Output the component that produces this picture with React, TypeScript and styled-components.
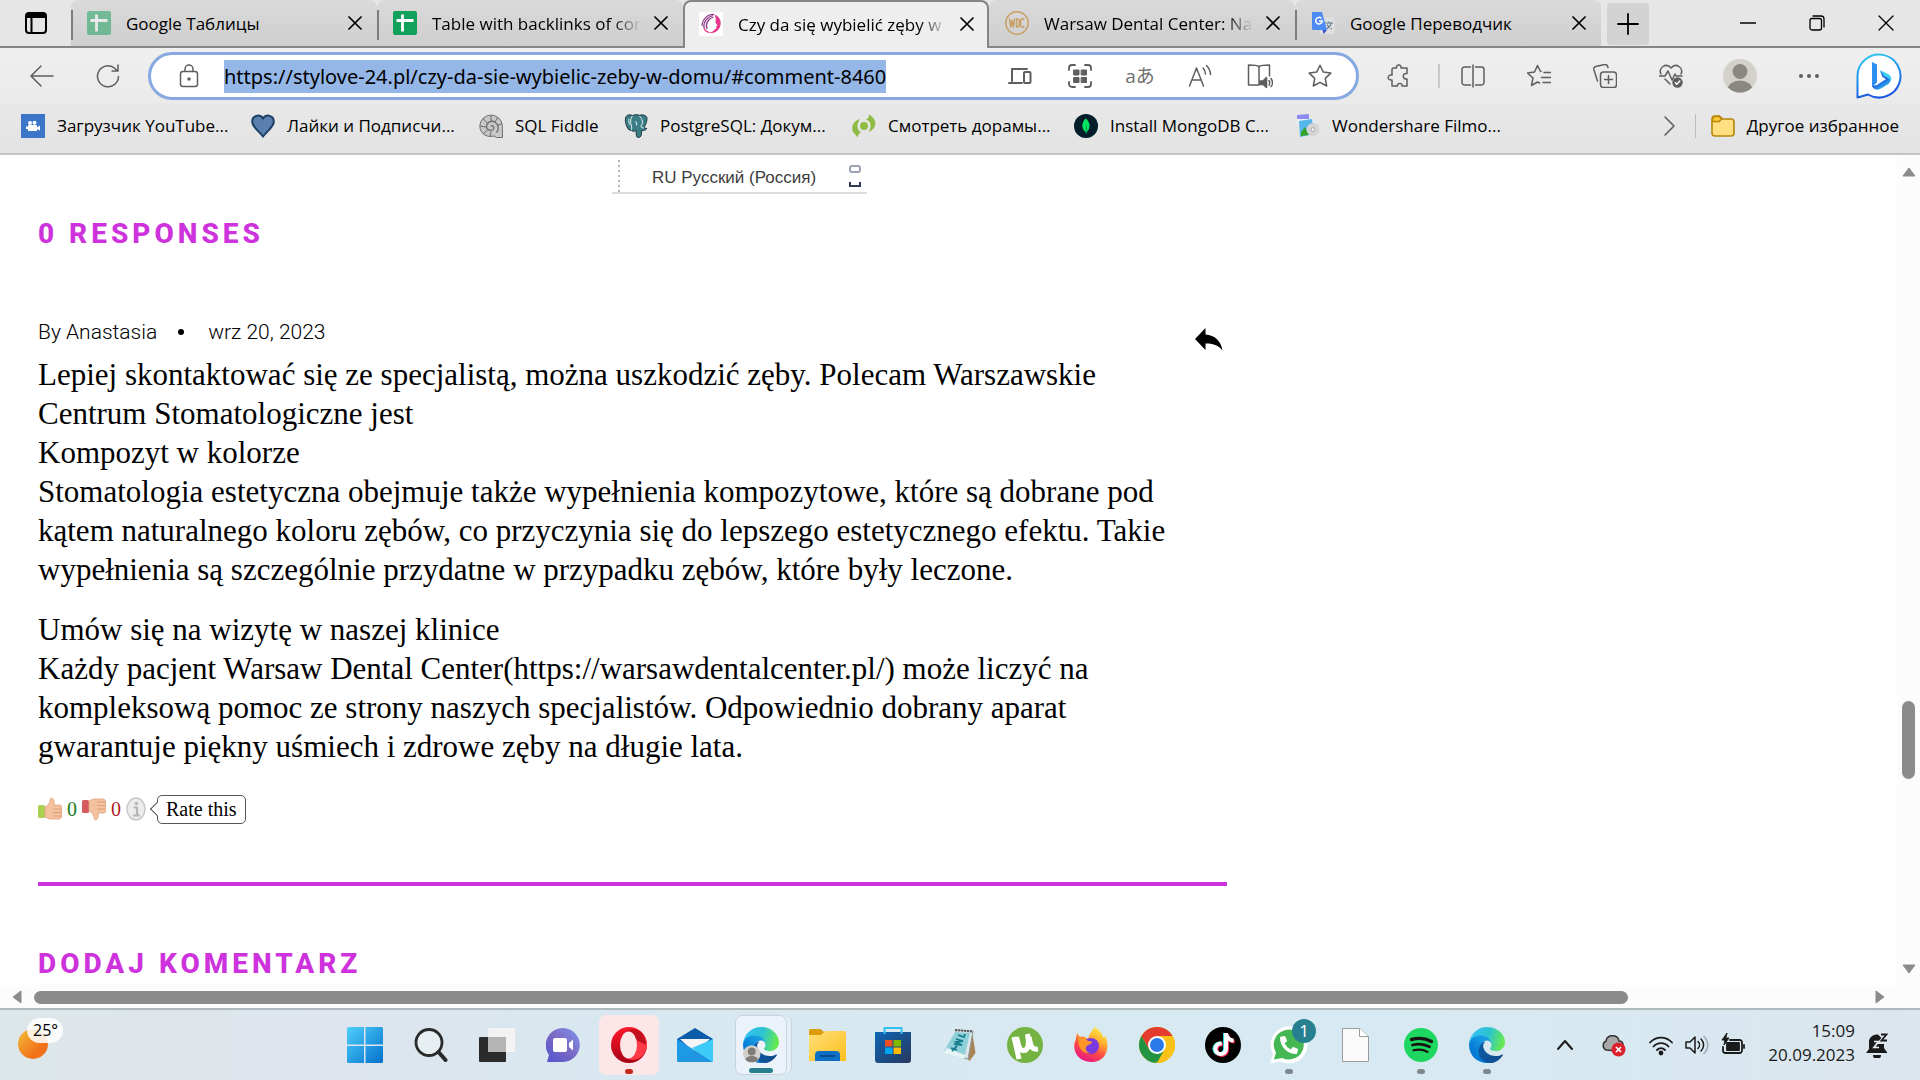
import React from "react";
import styled, { createGlobalStyle, css } from "styled-components";
import { SiMongodb } from "react-icons/si";
import { FaTiktok, FaPhoneAlt } from "react-icons/fa";

const ui = `"Open Sans", "Noto Sans", "Noto Sans CJK JP", sans-serif`;
const serif = `"Liberation Serif", serif`;
const accent = "#cd32dc";

const GlobalStyle = createGlobalStyle`
  *, *::before, *::after { box-sizing: border-box; }
  body { margin: 0; background: #fff; font-family: ${ui}; color: #000; }
  button { border: 0; padding: 0; background: none; font: inherit; color: inherit; cursor: pointer; }
  svg { display: block; flex: none; }
  a { color: inherit; text-decoration: none; }
`;

const Screen = styled.div`
  min-height: 100vh;
  display: flex;
  flex-direction: column;
  overflow: hidden;
`;

/* ---------- tab strip ---------- */

const TabStrip = styled.header`
  display: flex;
  height: 48px;
  background: #e6e6e6;
  border-bottom: 2px solid #858585;
`;

const TabActions = styled.button`
  width: 71px;
  display: grid;
  place-items: center;
`;

const Tab = styled.div<{ $active?: boolean; $line?: boolean }>`
  flex: 0 1 306px;
  min-width: 0;
  height: 46px;
  display: flex;
  align-items: center;
  padding: 0 10px 0 16px;
  background: linear-gradient(#dadada, #cecece);
  border-radius: 8px 8px 0 0;
  font-size: 17px;
  ${(p) =>
    p.$line &&
    css`
      background: linear-gradient(#7d7d7d, #7d7d7d) 0 10px / 2px 30px no-repeat, linear-gradient(#dadada, #cecece);
    `}
  ${(p) =>
    p.$active &&
    css`
      height: 48px;
      background: #eeeeee;
      border: 2px solid #858585;
      border-bottom: 0;
      padding: 0 8px 2px 14px;
    `}
`;

const TabLabel = styled.span<{ $fade?: boolean }>`
  flex: 1;
  min-width: 0;
  margin: 0 8px 0 15px;
  overflow: hidden;
  white-space: nowrap;
  ${(p) => p.$fade && css`mask-image: linear-gradient(to left, transparent, #000 28px);`}
`;

const TabClose = styled.button`
  width: 24px;
  height: 24px;
  display: grid;
  place-items: center;
`;

const NewTab = styled.button`
  width: 42px;
  height: 42px;
  margin: 3px auto 0 6px;
  border-radius: 4px;
  background: #d3d3d3;
  display: grid;
  place-items: center;
`;

const WindowButton = styled.button`
  width: 69px;
  display: grid;
  place-items: center;
`;

/* ---------- toolbar ---------- */

const Toolbar = styled.div`
  display: flex;
  align-items: center;
  height: 56px;
  padding-right: 4px;
  background: linear-gradient(#efefef, #eaeaea);
  color: #5e5e5e;
`;

const ToolButton = styled.button<{ $w?: number }>`
  width: ${(p) => p.$w ?? 66}px;
  height: 48px;
  display: grid;
  place-items: center;
`;

const NavGroup = styled.nav`
  display: flex;
  padding: 0 7px 0 9px;
`;

const AddressBar = styled.div`
  flex: 1;
  display: flex;
  align-items: center;
  height: 48px;
  padding: 0 6px 0 26px;
  border: 3px solid #87a9e2;
  border-radius: 24px;
  background: #fff;
`;

const AddressInput = styled.input`
  field-sizing: content;
  height: 33px;
  margin: 0 auto 0 23px;
  padding: 0;
  border: 0;
  outline: 0;
  background: #94b7e8;
  color: #000;
  font-family: "Noto Sans", sans-serif;
  font-size: 20px;
`;

const LanguageGlyph = styled.span`
  font-size: 19px;
  line-height: 24px;
  color: #707070;
`;

const ToolDivider = styled.span`
  width: 2px;
  height: 24px;
  background: #c8c8c8;
`;

/* ---------- favourites ---------- */

const Favourites = styled.nav`
  display: flex;
  align-items: center;
  height: 51px;
  padding: 0 21px 6px;
  background: linear-gradient(#e8e8e8, #e3e3e3);
  border-bottom: 2px solid #c4c4c4;
  font-size: 17px;
  white-space: nowrap;
`;

const Favourite = styled.a<{ $w?: number }>`
  display: flex;
  align-items: center;
  gap: 12px;
  ${(p) => p.$w && css`width: ${p.$w}px;`}
`;

const MoreFavourites = styled.button`
  margin-left: auto;
  width: 48px;
  height: 36px;
  display: grid;
  place-items: center;
  color: #5e5e5e;
`;

const FavouriteDivider = styled.span`
  width: 1px;
  height: 24px;
  margin: 0 15px 0 2px;
  background: #bdbdbd;
`;

/* ---------- page ---------- */

const Viewport = styled.main`
  flex: 1;
  display: grid;
  grid-template-columns: 1fr 23px;
  grid-template-rows: 1fr 22px;
  background: #fcfcfc;
`;

const Article = styled.article`
  background: #fff;
  padding: 5px 36px 0 38px;
  display: flex;
  flex-direction: column;
`;

const Shot = styled.div`
  width: 255px;
  height: 34px;
  margin-left: 574px;
  display: flex;
  align-items: center;
  justify-content: space-between;
  padding: 0 5px 0 40px;
  border-bottom: 2px solid #dcdcdc;
  background: repeating-linear-gradient(#b5b5b5 0 2px, #fff 2px 5px) 6px 0 / 2px 100% no-repeat;
`;

const ShotSelect = styled.select`
  appearance: none;
  border: 0;
  padding: 2px 0 0;
  background: none;
  color: #3c3c3c;
  font: 17px "Liberation Sans", sans-serif;
`;

const Heading = styled.h2`
  margin: 20px 0 0;
  font: 800 28px/40px Roboto, sans-serif;
  letter-spacing: 4px;
  color: ${accent};
`;

const Comment = styled.section`
  width: min(1189px, 100%);
  margin-bottom: 38px;
  padding: 59px 0 58px;
  border-bottom: 4px solid ${accent};
`;

const CommentHead = styled.div`
  display: flex;
  align-items: center;
  justify-content: space-between;
  height: 38px;
  margin-bottom: 4px;
  padding-right: 4px;
`;

const Meta = styled.p`
  margin: 0;
  display: flex;
  align-items: center;
  font: 300 21px/28px Roboto, sans-serif;
`;

const Dot = styled.span`
  width: 6px;
  height: 6px;
  margin: 0 24px 0 21px;
  border-radius: 50%;
  background: #000;
`;

const ReplyLink = styled.a`
  padding-top: 14px;
`;

const Text = styled.p`
  margin: 0 0 21px;
  font: 31px/39px ${serif};
  white-space: nowrap;
`;

const Rating = styled.div`
  display: flex;
  align-items: center;
  gap: 5px;
  height: 30px;
  margin-top: 28px;
  font: 20px/24px ${serif};
`;

const Votes = styled.span<{ $color: string }>`
  color: ${(p) => p.$color};
`;

const RateLabel = styled.span`
  position: relative;
  margin-left: 6px;
  height: 29px;
  padding: 0 8px;
  line-height: 27px;
  border: 1px solid #555;
  border-radius: 5px;
  &::before {
    content: "";
    position: absolute;
    left: -6px;
    top: 8px;
    width: 10px;
    height: 10px;
    border: solid #555;
    border-width: 0 0 1px 1px;
    background: #fff;
    transform: rotate(45deg);
  }
`;

/* ---------- scroll bars ---------- */

const ScrollY = styled.div`
  display: grid;
  grid-template-rows: 33px 1fr 34px;
  justify-items: center;
  align-items: center;
`;

const ScrollX = styled.div`
  display: grid;
  grid-template-columns: 34px 1fr 34px;
  align-items: center;
  justify-items: center;
`;

const TrackY = styled.div`
  align-self: stretch;
  display: grid;
  grid-template-rows: 513fr 78fr 173fr;
`;

const TrackX = styled.div`
  justify-self: stretch;
  display: grid;
  grid-template-columns: 1594fr 235fr;
`;

const Thumb = styled.div<{ $vertical?: boolean }>`
  background: #8b8b8b;
  border-radius: 7px;
  ${(p) => (p.$vertical ? css`grid-row: 2; width: 13px;` : css`height: 13px;`)}
`;

/* ---------- taskbar ---------- */

const Taskbar = styled.footer`
  height: 72px;
  display: grid;
  grid-template-columns: 332px 1fr auto;
  align-items: center;
  border-top: 2px solid #aeb9be;
  background: linear-gradient(90deg, #dde6e8 0%, #dee5ee 18%, #d8e8f0 33%, #d7e9f2 70%, #d9e8f0 90%, #dde5ee 100%);
`;

const Weather = styled.button`
  position: relative;
  width: 48px;
  height: 48px;
  margin-left: 16px;
  &::before {
    content: "";
    position: absolute;
    left: 2px;
    top: 8px;
    width: 30px;
    height: 30px;
    border-radius: 50%;
    background: linear-gradient(135deg, #f3bf38, #f1701a 70%);
  }
`;

const Temperature = styled.span`
  position: absolute;
  left: 11px;
  top: -3px;
  padding: 0 5px 0 6px;
  border-radius: 13px;
  background: rgba(255, 255, 255, 0.85);
  font-size: 16px;
  line-height: 25px;
`;

const Apps = styled.div`
  display: flex;
`;

const AppButton = styled.button<{ $tile?: string; $mark?: string; $wide?: boolean }>`
  position: relative;
  width: 60px;
  height: 60px;
  margin: 0 3px;
  display: grid;
  place-items: center;
  border-radius: 7px;
  ${(p) => p.$tile && css`background: ${p.$tile};`}
  ${(p) =>
    p.$mark &&
    css`
      &::after {
        content: "";
        position: absolute;
        left: calc(50% - ${p.$wide ? 12 : 4}px);
        bottom: 1px;
        width: ${p.$wide ? 24 : 8}px;
        height: 5px;
        border-radius: 3px;
        background: ${p.$mark};
      }
    `}
`;

const CurrentApp = styled(AppButton)`
  width: 52px;
  margin: 0 7px;
  background: #ebf2f9;
  border: 1px solid #c6d5dd;
  box-shadow: 5px 0 0 -1px #e4eff6, 6px 0 0 -1px #c6d5dd;
`;

const Badge = styled.span`
  position: absolute;
  right: 3px;
  top: 4px;
  width: 24px;
  height: 24px;
  border-radius: 50%;
  background: #26808f;
  color: #fff;
  font-size: 17px;
  line-height: 24px;
  text-align: center;
`;

const Tray = styled.div`
  display: flex;
  align-items: center;
  padding-right: 28px;
  color: #1a1a1a;
`;

const TrayButton = styled.button<{ $w: number }>`
  width: ${(p) => p.$w}px;
  height: 48px;
  display: grid;
  place-items: center;
`;

const Clock = styled.time`
  width: 104px;
  margin-right: 9px;
  padding-bottom: 4px;
  font-size: 17px;
  line-height: 24px;
  text-align: right;
`;

/* ---------- drawings ---------- */

type LineProps = { size?: number; box?: number; sw?: number; children: React.ReactNode };
const Line = ({ size = 24, box = 24, sw = 1.5, children }: LineProps) => (
  <svg width={size} height={size} viewBox={`0 0 ${box} ${box}`} fill="none" stroke="currentColor" strokeWidth={sw} strokeLinecap="round" strokeLinejoin="round" aria-hidden="true">
    {children}
  </svg>
);

const Cross = () => <Line size={14} box={14} sw={1.7}><path d="M1 1l12 12M13 1L1 13" /></Line>;

const SheetIcon = ({ faded }: { faded?: boolean }) => (
  <svg width="24" height="24" viewBox="0 0 24 24" opacity={faded ? 0.5 : 1}>
    <rect width="24" height="24" rx="2" fill="#12a15a" />
    <path d="M9.500 3.500v17M3.500 9.500h17" stroke="#fff" strokeWidth="2.800" />
  </svg>
);

const StyloveIcon = () => (
  <svg width="24" height="24" viewBox="0 0 24 24">
    <rect width="24" height="24" fill="#fff" />
    <path d="M15 2.500c7 2 8 9 5.500 13.500-2 4-7 6-12 4.500 4 0 6-1 7-3l2-1-.5-2 1.500-1-2-3c.5-3 .5-6-1.500-8z" fill="#e8388d" />
    <path d="M3 14C3 8 8 2 15 2.500M5 16C4 10 8 5 14 3.500M8 17C6 12 9 7 14.500 5" fill="none" stroke="#8d3c88" strokeWidth="1.200" />
    <path d="M5 16c.5 2 2 3.500 5 4.500" fill="none" stroke="#e8388d" strokeWidth="1.200" />
  </svg>
);

const WdcIcon = () => (
  <svg width="24" height="24" viewBox="0 0 24 24" fill="none" stroke="#c9a064">
    <circle cx="12" cy="12" r="11.200" strokeWidth="1.400" />
    <path d="M4.500 7.500l1.200 9 1.300-7 1.300 7 1.200-9M11.500 7.800v8.400M11.500 7.800c4 0 4 8.400 0 8.400M19.500 8.500c-3.400-2-4 0-4 3.500s.6 5.500 4 3.500" strokeWidth="1.500" />
  </svg>
);

const TranslateIcon = () => (
  <svg width="24" height="24" viewBox="0 0 24 24">
    <rect x="9" y="6" width="14.500" height="17" rx="1.500" fill="#dfdfdf" />
    <path d="M14 12h8M18 10.500v1.500M20.500 12c-1 3-3 5-5 6M16 13.500c1 2 3 3.500 5 4.500" stroke="#607988" strokeWidth="1.100" fill="none" />
    <path d="M2 1h9l5 18H2.500A1.500 1.500 0 0 1 1 17.500V2a1 1 0 0 1 1-1z" fill="#4c8bf5" />
    <path d="M11.500 19h4.500l-3.500 4z" fill="#3050c8" />
    <path d="M10.500 7.500A3.300 3.300 0 1 0 11.300 10H8" stroke="#fff" strokeWidth="1.500" fill="none" />
  </svg>
);

const DownloaderIcon = () => (
  <svg width="24" height="24" viewBox="0 0 24 24">
    <rect width="24" height="24" fill="#3b76c8" />
    <circle cx="9" cy="9" r="2" fill="#fff" /><circle cx="13.500" cy="8.700" r="2" fill="#fff" />
    <path d="M7 11h9v6H7zM16 13.500l3-2v5l-3-1.500zM5 12l2 1v2H5z" fill="#fff" />
  </svg>
);

const HeartIcon = () => (
  <svg width="24" height="24" viewBox="0 0 24 24">
    <path d="M12 22.500C7 16 1.200 13 1.200 7.500 1.200 1.500 8.500-.5 12 4.500c3.500-5 10.800-3 10.800 3 0 5.500-5.800 8.500-10.800 15z" fill="#5a80b0" stroke="#1d3f66" strokeWidth="2" />
  </svg>
);

const ShellIcon = () => (
  <svg width="24" height="24" viewBox="0 0 24 24" fill="none" stroke="#6d6d6d">
    <path d="M23.500 23.500h-6L15 22C7 24 .8 19 .8 12a11.300 11.300 0 0 1 22.500-1z" fill="#c9c9c9" />
    <path d="M12 12.500c1-2 4 0 2.500 2.500s-7 1.500-7-2.500 5-7 9-4 3 8 1 10" strokeWidth="1.300" />
    <path d="M12 8V1.500M8.500 9.500L4 4.500M7 13l-6-1M8.500 16l-4.500 4M12 17.500l-1 5M16 8l3-5M18.500 11.500l4.500-2" />
  </svg>
);

const ElephantIcon = () => (
  <svg width="24" height="24" viewBox="0 0 24 24" strokeLinejoin="round">
    <path d="M3 1.500C5 .5 7 .8 8.500 1.500c2-1 5-1 7-.2 3-1 6-.3 7.300 2 .8 3-1 7.500-3 10.500l3 .7c-1 1.800-3 2.200-5 2l-.8 5.500c-1 1.800-3.500 1.800-4.500.5l-.7-6.500C10 18 8 17.500 7.500 16c-2 .8-3.500-.5-4.500-3C1.500 9.500.2 4 3 1.500z" fill="#3a7d84" stroke="#1f3b44" strokeWidth="1" />
    <path d="M8.500 2C6 5 6.500 9 7.500 12c.5 1.500 0 3 0 4M15.500 2c3 3 4 7 1.500 10-1 1 1.500 2 3 2M11 7.500c1.500 0 2 2 1.500 4M5 5c-.5 2 0 4 1 6" fill="none" stroke="#eaf4f5" strokeWidth="1" />
  </svg>
);

const DoramaIcon = () => (
  <svg width="24" height="24" viewBox="0 0 24 24">
    <circle cx="12" cy="12" r="4" fill="#8fbb45" />
    <path d="M17 .5c0 3-1 4-3 5 5 1.500 6 7 2.500 12.500C23 16 25 9 22 5c-1-2-3-3-5-4.500zM8 5C1 7-1 13 1 18l5 5.500c0-3 1-4 3-5C5 16 4 11 8 5z" fill="#8fbb45" />
  </svg>
);

const MongoIcon = () => (
  <svg width="24" height="24" viewBox="0 0 24 24">
    <circle cx="12" cy="12" r="12" fill="#021e2b" />
    <SiMongodb x="4" y="4" size={16} color="#04e762" />
  </svg>
);

const FilmoraIcon = () => (
  <svg width="24" height="24" viewBox="0 0 24 24">
    <path d="M1 1l12-1v5L1 5z" fill="#8b8cf0" /><path d="M1 5h18v5H1z" fill="#e9eef5" />
    <path d="M3 7l13-2 2 15-14 3z" fill="#55b7ee" /><path d="M5 18l4-5 4 8-8 1z" fill="#36a22a" />
    <circle cx="17" cy="15.500" r="6.500" fill="#d4d4d4" /><circle cx="17" cy="15.500" r="1.800" fill="#f5f5f5" stroke="#aaa" />
  </svg>
);

const YellowFolder = () => (
  <svg width="24" height="24" viewBox="0 0 24 24">
    <path d="M1 5a3 3 0 0 1 3-3h4.500l3 3H20a3 3 0 0 1 3 3v11a3 3 0 0 1-3 3H4a3 3 0 0 1-3-3z" fill="#ffdf82" stroke="#b5880c" strokeWidth="1.600" />
    <path d="M1.500 5A2.500 2.500 0 0 1 4 2.500h4.200l2.500 2.500-2.500 2.500H1.500z" fill="#fcc934" stroke="#b5880c" strokeWidth="1.600" />
  </svg>
);

const Avatar = () => (
  <svg width="34" height="34" viewBox="0 0 34 34">
    <defs><clipPath id="avatarRound"><circle cx="17" cy="17" r="16.500" /></clipPath></defs>
    <circle cx="17" cy="17" r="17" fill="#d4d0cb" />
    <g clipPath="url(#avatarRound)" fill="#8b8783"><circle cx="17" cy="12.500" r="7.500" /><ellipse cx="17" cy="31" rx="12.500" ry="9.500" /></g>
  </svg>
);

const BingIcon = () => (
  <svg width="46" height="46" viewBox="0 0 46 46">
    <defs>
      <linearGradient id="bingRim" x1="0" y1="0" x2="0.300" y2="1"><stop stopColor="#2ed0f5" /><stop offset="1" stopColor="#1b57e0" /></linearGradient>
      <linearGradient id="bingMark" x1="0" y1="0" x2="0.600" y2="1"><stop stopColor="#2d8ff0" /><stop offset=".6" stopColor="#1a56dc" /><stop offset="1" stopColor="#35c9ee" /></linearGradient>
    </defs>
    <path d="M1.500 44.500V23a21.500 21.500 0 1 1 10.500 18.500z" fill="#fff" stroke="url(#bingRim)" strokeWidth="2" strokeLinejoin="round" />
    <path d="M16 9l5 2.500v18l-5 4.500z" fill="#2d8ff0" />
    <path d="M16 33c2 4 6 4.500 9 2.500l7.500-4.500c3.500-3 2.500-8-.5-9l-8-4 2.500 6 3.500 2-9 6z" fill="url(#bingMark)" />
    <path d="M24 17l8 4c3 1.500 4 4 3 7-2-3-4-3.500-6.500-4.500z" fill="#42cdf2" />
  </svg>
);

const ThumbHand = ({ down }: { down?: boolean }) => (
  <svg width="24" height="24" viewBox="0 0 24 24">
    <g transform={down ? "translate(0 24) scale(1 -1)" : undefined}>
      <rect x="0" y="8" width="7" height="13" rx="1.500" fill={down ? "#d55b5e" : "#abd152"} />
      <path d="M7 10c3-1 5-4 5.500-8.500C15 .5 17 3 16 8h6a2 2 0 0 1 1.500 3v8c0 2-1 3-3 3h-9L7 20z" fill="#f4c29f" stroke="#e0a27c" strokeWidth=".8" />
      <path d="M15 12h8M15 15.500h8M15 19h8" stroke="#d99a72" strokeWidth=".9" />
    </g>
  </svg>
);

const InfoIcon = () => (
  <svg width="20" height="24" viewBox="0 0 20 24">
    <ellipse cx="10" cy="12" rx="9" ry="11" fill="#ececec" stroke="#c9c9c9" strokeWidth="1.500" />
    <circle cx="10.500" cy="6.500" r="1.800" fill="#b5b5b5" />
    <path d="M7.500 10.500H11V18M7 18.500h7" stroke="#b5b5b5" strokeWidth="2.200" fill="none" />
  </svg>
);

const ReplyIcon = () => (
  <svg width="28" height="23" viewBox="0 0 28 23"><path d="M0 11L10.500 0v6.500C20 7 26 13 27.500 22.500 23 17 18 15.500 10.500 15.500V22z" /></svg>
);

const Arrow = ({ d }: { d: string }) => (
  <svg width="14" height="14" viewBox="0 0 14 14"><path d={d} fill="#8b8b8b" stroke="#8b8b8b" strokeLinejoin="round" /></svg>
);

const WindowsIcon = () => (
  <svg width="36" height="36" viewBox="0 0 36 36">
    <defs><linearGradient id="win" x1="0" y1="0" x2="1" y2="1"><stop stopColor="#4fd0fa" /><stop offset="1" stopColor="#0570cd" /></linearGradient></defs>
    <path d="M1.500 0H17v17.500H0v-16A1.500 1.500 0 0 1 1.500 0zM18.500 0h16A1.500 1.500 0 0 1 36 1.500v16H18.500zM0 19h17v17H1.500A1.500 1.500 0 0 1 0 34.500zM18.500 19H36v15.500a1.500 1.500 0 0 1-1.500 1.500h-16z" fill="url(#win)" />
  </svg>
);

const SearchIcon = () => (
  <svg width="34" height="34" viewBox="0 0 34 34" fill="none" stroke="#2a2a2a" strokeLinecap="round">
    <circle cx="15" cy="14.500" r="13" fill="#e6eef2" strokeWidth="2.800" /><path d="M24.500 24l7 8" strokeWidth="4" />
  </svg>
);

const TaskViewIcon = () => (
  <svg width="36" height="34" viewBox="0 0 36 34">
    <rect x="0" y="9" width="27" height="25" rx="1" fill="#2b2b2b" /><rect x="9" y="0" width="27" height="24" rx="1" fill="#f3f3f3" />
    <rect x="9" y="9" width="18" height="15" fill="#b4b4b4" />
  </svg>
);

const ChatIcon = () => (
  <svg width="34" height="34" viewBox="0 0 34 34">
    <defs><linearGradient id="chat" x1="1" y1="0" x2="0" y2="1"><stop stopColor="#7e97ee" /><stop offset=".5" stopColor="#7b68c4" /><stop offset="1" stopColor="#4e55cf" /></linearGradient></defs>
    <path d="M1 34l2-7A17 17 0 1 1 17 34z" fill="url(#chat)" />
    <rect x="7" y="10" width="14" height="14" rx="2" fill="#fff" /><path d="M23 15l4-3.500v11L23 19z" fill="#fff" />
  </svg>
);

const OperaIcon = () => (
  <svg width="36" height="36" viewBox="0 0 36 36">
    <defs><linearGradient id="opera" x1="0" y1="0" x2="0" y2="1"><stop stopColor="#ff1b2d" /><stop offset="1" stopColor="#a70014" /></linearGradient></defs>
    <circle cx="18" cy="18" r="18" fill="url(#opera)" />
    <path d="M12 7c14-10 24 2 24 11s-10 21-24 11z" fill="#ff3a46" /><path d="M12 7c4-5 13-6 18-2.300 3 3 5 8 5 13z" fill="#a9000f" opacity=".7" />
    <ellipse cx="17.500" cy="18" rx="8.500" ry="13.500" fill="#fde6e8" />
  </svg>
);

const MailIcon = () => (
  <svg width="36" height="34" viewBox="0 0 36 34">
    <path d="M0 11L18 0l18 11v8H0z" fill="#0a5ba8" /><path d="M3 11h30L18 25z" fill="#f4f4f6" />
    <path d="M0 11l36 23H1.500A1.500 1.500 0 0 1 0 32.500z" fill="#1e9be6" /><path d="M36 11v21.500a1.500 1.500 0 0 1-1.500 1.500L15 20z" fill="#3ccaf7" /><path d="M0 33l18-10.500L35.500 34H2z" fill="#2196e0" />
  </svg>
);

const EdgeIcon = ({ id, person }: { id: string; person?: boolean }) => (
  <svg width="36" height="36" viewBox="0 0 256 256">
    <defs>
      <linearGradient id={id + "a"} x1="63" y1="178" x2="242" y2="178" gradientUnits="userSpaceOnUse"><stop stopColor="#0c59a4" /><stop offset="1" stopColor="#114a8b" /></linearGradient>
      <linearGradient id={id + "b"} x1="157" y1="100" x2="46" y2="222" gradientUnits="userSpaceOnUse"><stop stopColor="#1b9de2" /><stop offset=".3" stopColor="#1595df" /><stop offset=".7" stopColor="#0680d7" /><stop offset="1" stopColor="#0078d4" /></linearGradient>
      <linearGradient id={id + "c"} x1="20" y1="60" x2="240" y2="120" gradientUnits="userSpaceOnUse"><stop stopColor="#35c1f1" /><stop offset=".5" stopColor="#2cc3d2" /><stop offset="1" stopColor="#66eb4e" /></linearGradient>
    </defs>
    <path fill={`url(#${id}a)`} d="M235.700 195.500a93.700 93.700 0 0 1-10.600 4.700 101.900 101.900 0 0 1-35.900 6.400c-47.300 0-88.500-32.500-88.500-74.300a31.500 31.500 0 0 1 16.400-27.300c-42.800 1.800-53.800 46.400-53.800 72.500 0 73.900 68.100 81.400 82.800 81.400 7.900 0 19.800-2.300 27-4.600l1.300-.4a128.300 128.300 0 0 0 66.600-52.800 4 4 0 0 0-5.300-5.600z" />
    <path fill={`url(#${id}b)`} d="M105.700 241.400a79.200 79.200 0 0 1-22.700-21.300 80.700 80.700 0 0 1 29.500-120c3.100-1.500 8.500-4.100 15.600-4a32.400 32.400 0 0 1 25.700 13 31.900 31.900 0 0 1 6.300 18.700c0-.2 24.500-79.600-80-79.600-43.900 0-80 41.600-80 78.200a130.200 130.200 0 0 0 12.100 56 128 128 0 0 0 156.400 67.100 75.600 75.600 0 0 1-62.900-8.100z" />
    <path fill={`url(#${id}c)`} d="M152.300 148.900c-.8 1-3.300 2.500-3.300 5.600 0 2.600 1.700 5.100 4.700 7.200 14.400 10 41.500 8.700 41.600 8.700a59.600 59.600 0 0 0 30.300-8.300 61.400 61.400 0 0 0 30.400-52.900c.3-22.400-8-37.300-11.300-43.900C223.500 23.800 177.700 0 128 0A128 128 0 0 0 0 126.200c.5-36.500 36.800-66 80-66 3.500 0 23.500.3 42 10 16.300 8.600 24.900 18.900 30.900 29.200 6.200 10.700 7.200 24.200 7.200 29.500s-2.700 13.300-7.800 20z" />
    {person && <g><circle cx="62" cy="192" r="62" fill="#d4d0cb" /><circle cx="62" cy="174" r="28" fill="#7f7b77" /><path d="M18 232c4-34 84-34 88 0-24 24-64 24-88 0z" fill="#7f7b77" /></g>}
  </svg>
);

const ExplorerIcon = () => (
  <svg width="37" height="32" viewBox="0 0 37 32">
    <defs><linearGradient id="exp" x1="0" y1="0" x2="1" y2="1"><stop stopColor="#ffe07a" /><stop offset="1" stopColor="#fcbf1d" /></linearGradient></defs>
    <path d="M0 1.500A1.500 1.500 0 0 1 1.500 0h10L15 3v4H0z" fill="#dd9c0a" /><path d="M0 6h12l4-4h19.500A1.500 1.500 0 0 1 37 3.500V32H0z" fill="url(#exp)" />
    <path d="M6 32v-6a4 4 0 0 1 4-4h17a4 4 0 0 1 4 4v6z" fill="#0f6fc5" /><path d="M11 27h15" stroke="#06407c" strokeWidth="1.500" />
  </svg>
);

const StoreIcon = () => (
  <svg width="36" height="36" viewBox="0 0 36 36">
    <defs><linearGradient id="store" x1="0" y1="0" x2="1" y2="1"><stop stopColor="#0d67b5" /><stop offset="1" stopColor="#28375f" /></linearGradient></defs>
    <path d="M0 5h36v28a3 3 0 0 1-3 3H3a3 3 0 0 1-3-3z" fill="url(#store)" /><path d="M9.500 7V1h17v6" fill="none" stroke="#35c0f2" strokeWidth="2" />
    <path d="M10 13h7.500v6.500H10z" fill="#f25022" /><path d="M18.500 13H26v6.500h-7.500z" fill="#7fba00" /><path d="M10 20.500h7.500V27H10z" fill="#00a4ef" /><path d="M18.500 20.500H26V27h-7.500z" fill="#ffb900" />
  </svg>
);

const XmlIcon = () => (
  <svg width="34" height="34" viewBox="0 0 34 34">
    <path d="M30 3l3.500 22-6 8-3-3z" fill="#a68553" /><path d="M14 2l17 1-5 28-9-2z" fill="#dfe6ea" stroke="#8a9ba4" />
    <path d="M13 4l15 1-6 26L1 25z" fill="#8fd0d8" /><path d="M1 25l21 6 1-4L5 20z" fill="#e7f4f6" /><path d="M13 2l18 1.500" stroke="#555" strokeWidth="2" strokeDasharray="2 1" />
    <path d="M9 20l6 2M15 18l-5 5M12 16l8 1-6-3 7-1-7-2M16 7l6 2 1-3" stroke="#167f8e" strokeWidth="1.800" fill="none" />
  </svg>
);

const TorrentIcon = () => (
  <svg width="36" height="36" viewBox="0 0 36 36">
    <circle cx="18" cy="18" r="18" fill="#74b341" />
    <path d="M7 10l5 22M9.500 10c2 8 2.500 14 7.500 13.500S22 15 20.500 7M22 10c2 10 3 13 9 12" fill="none" stroke="#fff" strokeWidth="5" />
  </svg>
);

const FirefoxIcon = () => (
  <svg width="36" height="36" viewBox="0 0 36 36">
    <defs><linearGradient id="fox" x1=".8" y1="0" x2=".3" y2="1"><stop stopColor="#fff44f" /><stop offset=".35" stopColor="#ffae2b" /><stop offset=".65" stopColor="#ff4a45" /><stop offset="1" stopColor="#e31587" /></linearGradient></defs>
    <path d="M22 0c5 3 7 7 8 10 2 1 2 0 2-2 5 10 3 27-14 27C4 35-2 22 3 12c0-2 0-4 2-6 0 2 1 3 2 4 3-1 6 0 8 2 1-5 4-8 7-12z" fill="url(#fox)" />
    <circle cx="18" cy="19" r="8" fill="#7a3ae0" /><path d="M5 11c5-1 8 1 10 3 2 0 4 0 4 1-1 3-4 2-6 5-1 3 1 5 4 6-8 1-12-5-12-15z" fill="#ff9526" />
  </svg>
);

const ChromeIcon = () => (
  <svg width="36" height="36" viewBox="0 0 36 36">
    <circle cx="18" cy="18" r="18" fill="#fbc116" />
    <path d="M2.400 9A18 18 0 0 1 33.600 9H18l-7.800 13.500z" fill="#e33b2e" /><path d="M2.400 9l7.800 13.500L18 27l-1 9A18 18 0 0 1 2.400 9z" fill="#229342" /><path d="M18 36l7.800-13.500-7.800 4.500-5-2z" fill="#229342" /><path d="M25.800 22.500L18 36A18 18 0 0 0 33.600 9H18z" fill="#fbc116" />
    <circle cx="18" cy="18" r="9" fill="#fff" /><circle cx="18" cy="18" r="7" fill="#2b78e8" />
  </svg>
);

const TikTokIcon = () => (
  <svg width="36" height="36" viewBox="0 0 36 36">
    <circle cx="18" cy="18" r="18" />
    <FaTiktok x="6" y="6" size={23} color="#25f4ee" /><FaTiktok x="8" y="7" size={23} color="#fe2c55" /><FaTiktok x="7" y="6" size={23} color="#fff" />
  </svg>
);

const WhatsAppIcon = () => (
  <svg width="38" height="38" viewBox="0 0 38 38">
    <path d="M0 37.500L3 28A18.500 18.500 0 1 1 11 35.500z" fill="#fff" />
    <path d="M4 33.500l2-7A15 15 0 1 1 12 32z" fill="#45b854" />
    <FaPhoneAlt x="10" y="10" size={18} color="#fff" />
  </svg>
);

const FileIcon = () => (
  <svg width="27" height="34" viewBox="0 0 27 34"><path d="M.5.5h17l9 8v25H.5z" fill="#fafafa" stroke="#9b9b9b" /><path d="M17.500.5v8h9" fill="#fff" stroke="#9b9b9b" /></svg>
);

const SpotifyIcon = () => (
  <svg width="34" height="34" viewBox="0 0 34 34" fill="none" stroke="#191414" strokeLinecap="round">
    <circle cx="17" cy="17" r="17" fill="#1ed760" stroke="none" />
    <path d="M7.500 11.500c7-2 14-1.300 20 2" strokeWidth="3.400" /><path d="M8.500 17c6-1.700 12-1 17 1.800" strokeWidth="2.800" /><path d="M9.500 22.300c5-1.300 10-.8 14 1.600" strokeWidth="2.200" />
  </svg>
);

const CloudIcon = () => (
  <svg width="26" height="24" viewBox="0 0 26 24">
    <path d="M6 17a5 5 0 0 1 0-9c1-7 12-7 13 0 3 0 4 2 4 4l-6 6z" fill="#a9a9a9" stroke="#333" strokeWidth="1.500" />
    <circle cx="18.500" cy="16.500" r="7" fill="#d9232e" /><path d="M16 14l5 5M21 14l-5 5" stroke="#fff" strokeWidth="1.700" />
  </svg>
);

const BellIcon = () => (
  <svg width="24" height="26" viewBox="0 0 24 26">
    <path d="M0 21l3-4V10c0-5 4-7.500 9-7.500l6 6V16l3.500 5z" fill="#1a1a1a" /><path d="M7 23h8a4 4 0 0 1-8 0z" fill="#1a1a1a" />
    <path d="M8 9.500h4.500l-4.500 6h5" stroke="#e6edf2" strokeWidth="1.700" fill="none" /><path d="M14.500 2h7l-7 8h7" stroke="#dfe7ee" strokeWidth="4" fill="none" /><path d="M15 2.500h5.500l-5 6H21" stroke="#1a1a1a" strokeWidth="1.800" fill="none" />
  </svg>
);

const HealthIcon = () => (
  <Line><path d="M2 10C-1 4 7-2 12 4c5-6 13 0 10 6M0 12h6l3-5 4 9 3-6 1 2h6M6 15l5 5" /><circle cx="18.500" cy="18.500" r="5.200" fill="currentColor" stroke="none" /><path d="M16.300 18.700l1.500 1.500 3-3.200" stroke="#fff" /></Line>
);

const star = "M12 1.200l3.300 6.900 7.500 1-5.500 5.300 1.400 7.600L12 18.400 5.300 22l1.400-7.600L1.200 9.100l7.500-1z";

/* ---------- data ---------- */

const tabs = [
  { title: "Google Таблицы", icon: <SheetIcon faded />, line: true },
  { title: "Table with backlinks of com", icon: <SheetIcon />, line: true, fade: true },
  { title: "Czy da się wybielić zęby w", icon: <StyloveIcon />, active: true, fade: true },
  { title: "Warsaw Dental Center: Naj", icon: <WdcIcon />, fade: true },
  { title: "Google Переводчик", icon: <TranslateIcon />, line: true },
];

const favourites = [
  { title: "Загрузчик YouTube...", icon: <DownloaderIcon />, w: 230 },
  { title: "Лайки и Подписчи...", icon: <HeartIcon />, w: 228 },
  { title: "SQL Fiddle", icon: <ShellIcon />, w: 145 },
  { title: "PostgreSQL: Докум...", icon: <ElephantIcon />, w: 228 },
  { title: "Смотреть дорамы...", icon: <DoramaIcon />, w: 222 },
  { title: "Install MongoDB C...", icon: <MongoIcon />, w: 222 },
  { title: "Wondershare Filmo...", icon: <FilmoraIcon />, w: 230 },
];

type AppEntry = { name: string; icon: React.ReactNode; mark?: string; tile?: string; current?: boolean; badge?: string };
const apps: AppEntry[] = [
  { name: "Start", icon: <WindowsIcon /> },
  { name: "Search", icon: <SearchIcon /> },
  { name: "Task view", icon: <TaskViewIcon /> },
  { name: "Chat", icon: <ChatIcon /> },
  { name: "Opera", icon: <OperaIcon />, mark: "#c42b1c", tile: "#fde6e8" },
  { name: "Mail", icon: <MailIcon /> },
  { name: "Edge profile", icon: <EdgeIcon id="e1" person />, mark: "#26808f", current: true },
  { name: "Explorer", icon: <ExplorerIcon /> },
  { name: "Store", icon: <StoreIcon /> },
  { name: "XML Notepad", icon: <XmlIcon /> },
  { name: "Torrent", icon: <TorrentIcon /> },
  { name: "Firefox", icon: <FirefoxIcon /> },
  { name: "Chrome", icon: <ChromeIcon /> },
  { name: "TikTok", icon: <TikTokIcon /> },
  { name: "WhatsApp", icon: <WhatsAppIcon />, mark: "#7f888d", badge: "1" },
  { name: "File", icon: <FileIcon /> },
  { name: "Spotify", icon: <SpotifyIcon />, mark: "#7f888d" },
  { name: "Edge", icon: <EdgeIcon id="e2" />, mark: "#7f888d" },
];

export default function App() {
  return (
    <Screen>
      <GlobalStyle />
      <TabStrip>
        <TabActions aria-label="Tab actions">
          <Line size={22} box={22} sw={2}><rect x="1" y="1" width="20" height="20" rx="3" /><path d="M2 3h18M2 5h18M6.500 6v15" /></Line>
        </TabActions>
        {tabs.map((t) => (
          <Tab key={t.title} $active={t.active} $line={t.line}>
            {t.icon}
            <TabLabel $fade={t.fade}>{t.title}</TabLabel>
            <TabClose aria-label="Close tab"><Cross /></TabClose>
          </Tab>
        ))}
        <NewTab aria-label="New tab"><Line size={22} box={22} sw={1.8}><path d="M11 1v20M1 11h20" /></Line></NewTab>
        <WindowButton aria-label="Minimize"><Line size={16} box={16} sw={1.3}><path d="M0 8h16" /></Line></WindowButton>
        <WindowButton aria-label="Restore"><Line size={16} box={16} sw={1.3}><rect x="1" y="3.500" width="11.500" height="11.500" rx="2" /><path d="M4 1h8a3 3 0 0 1 3 3v8" /></Line></WindowButton>
        <WindowButton aria-label="Close"><Line size={16} box={16} sw={1.3}><path d="M1 1l14 14M15 1L1 15" /></Line></WindowButton>
      </TabStrip>

      <Toolbar>
        <NavGroup>
          <ToolButton aria-label="Back"><Line><path d="M23 12H1M11 2L1 12l10 10" /></Line></ToolButton>
          <ToolButton aria-label="Refresh"><Line><path d="M22.500 12.500A10.500 10.500 0 1 1 19 4.500l2.500 2.500M22 1v6h-6" /></Line></ToolButton>
        </NavGroup>
        <AddressBar>
          <Line><rect x="3.500" y="7.500" width="17" height="15" rx="2.500" /><path d="M8 7V5a4 4 0 0 1 8 0v2" /><circle cx="12" cy="15" r="1" fill="currentColor" /></Line>
          <AddressInput aria-label="Address" defaultValue="https://stylove-24.pl/czy-da-sie-wybielic-zeby-w-domu/#comment-8460" />
          <ToolButton $w={60} aria-label="Devices"><Line sw={2}><path d="M19 5H4v12M1 19h13" /><rect x="16" y="8" width="6.500" height="11" rx="1" /></Line></ToolButton>
          <ToolButton $w={60} aria-label="QR code"><Line sw={1.8}><path d="M1 6V4a3 3 0 0 1 3-3h3M17 1h3a3 3 0 0 1 3 3v2M23 18v2a3 3 0 0 1-3 3h-3M7 23H4a3 3 0 0 1-3-3v-2" /><path d="M6 6h5v5H6zM13.500 6h5v5h-5zM6 13.500h5v5H6zM13.500 13.500h5v5h-5z" fill="currentColor" strokeWidth="1" /></Line></ToolButton>
          <ToolButton $w={60} aria-label="Translate"><LanguageGlyph>aあ</LanguageGlyph></ToolButton>
          <ToolButton $w={60} aria-label="Read aloud"><Line><path d="M1.500 22L8.500 4l7 18M4 16h9M15 4c2 2 2.500 4 2.500 6M18.500 1.500c3 3 4 6 4 9" /></Line></ToolButton>
          <ToolButton $w={60} aria-label="Immersive reader"><Line size={26} box={26}><path d="M12 3v19M12 3.500C10 2 7 2 1.500 2v20H12M12 3.500C14 2 17 2 22.500 2v11" /><path d="M13 18h3l3.500-3.500v10L16 21.500h-3z" fill="currentColor" /><path d="M22 17.500c1 1.500 1 3 0 4.500M24 15.500c2 3 2 6 0 8" /></Line></ToolButton>
          <ToolButton $w={60} aria-label="Favourite"><Line><path d={star} /></Line></ToolButton>
        </AddressBar>
        <ToolButton $w={79} aria-label="Extensions"><Line><path d="M6 4h3.500c-1-4 5.500-4 4.500 0H20v5.500c-5-1-5 6.500 0 5.500V22h-5c1-3.500-5.500-3.500-4.500 0H5v-6c-5 1-5-6 0-5V5z" /></Line></ToolButton>
        <ToolDivider />
        <ToolButton aria-label="Split screen"><Line><path d="M9.500 3H3.500A2.500 2.500 0 0 0 1 5.500v13A2.500 2.500 0 0 0 3.500 21h6M14.500 3h6A2.500 2.500 0 0 1 23 5.500v13a2.500 2.500 0 0 1-2.500 2.500h-6M12 1v22" /></Line></ToolButton>
        <ToolButton aria-label="Favourites"><Line><path d="M14 7.500h-.5L10.500 1.500l-3 6.500-7 1L6 14l-1.500 7.500L10.500 18l2 1M17 8.500h7M14.500 13.500H24M16 18.500h8" /></Line></ToolButton>
        <ToolButton aria-label="Collections"><Line><rect x="7.500" y="8" width="16" height="15.500" rx="3" /><path d="M15.500 11.500v8M11.500 15.500h8M4.500 17L1 6c-.5-2 0-3 2-3.500L11.500.5c2-.3 3 .5 3.500 3" /></Line></ToolButton>
        <ToolButton aria-label="Browser essentials"><HealthIcon /></ToolButton>
        <ToolButton $w={72} aria-label="Profile"><Avatar /></ToolButton>
        <ToolButton aria-label="Menu"><Line sw={0}><g fill="currentColor"><circle cx="4" cy="12" r="2" /><circle cx="12" cy="12" r="2" /><circle cx="20" cy="12" r="2" /></g></Line></ToolButton>
        <ToolButton $w={74} aria-label="Bing"><BingIcon /></ToolButton>
      </Toolbar>

      <Favourites>
        {favourites.map((f) => (
          <Favourite key={f.title} href="#" $w={f.w}>{f.icon}{f.title}</Favourite>
        ))}
        <MoreFavourites aria-label="More"><Line sw={1.6}><path d="M8 3l9 9-9 9" /></Line></MoreFavourites>
        <FavouriteDivider />
        <Favourite href="#"><YellowFolder />Другое избранное</Favourite>
      </Favourites>

      <Viewport>
        <Article>
          <Shot>
            <ShotSelect aria-label="Language"><option>RU Русский (Россия)</option></ShotSelect>
            <svg width="14" height="24" viewBox="0 0 14 24" fill="none" stroke="#5a6480" strokeWidth="2"><rect x="2" y="2" width="10" height="6" rx="2" opacity=".6" /><path d="M2 18v4h10v-4" stroke="#333a55" /></svg>
          </Shot>
          <Heading>0 RESPONSES</Heading>
          <Comment>
            <CommentHead>
              <Meta>By Anastasia<Dot />wrz 20, 2023</Meta>
              <ReplyLink href="#" aria-label="Reply"><ReplyIcon /></ReplyLink>
            </CommentHead>
            <Text>
              Lepiej skontaktować się ze specjalistą, można uszkodzić zęby. Polecam Warszawskie<br />
              Centrum Stomatologiczne jest<br />
              Kompozyt w kolorze<br />
              Stomatologia estetyczna obejmuje także wypełnienia kompozytowe, które są dobrane pod<br />
              kątem naturalnego koloru zębów, co przyczynia się do lepszego estetycznego efektu. Takie<br />
              wypełnienia są szczególnie przydatne w przypadku zębów, które były leczone.
            </Text>
            <Text>
              Umów się na wizytę w naszej klinice<br />
              Każdy pacjent Warsaw Dental Center(https://warsawdentalcenter.pl/) może liczyć na<br />
              kompleksową pomoc ze strony naszych specjalistów. Odpowiednio dobrany aparat<br />
              gwarantuje piękny uśmiech i zdrowe zęby na długie lata.
            </Text>
            <Rating>
              <button aria-label="Thumb up"><ThumbHand /></button>
              <Votes $color="#1d7a1d">0</Votes>
              <button aria-label="Thumb down"><ThumbHand down /></button>
              <Votes $color="#b01c1c">0</Votes>
              <InfoIcon />
              <RateLabel>Rate this</RateLabel>
            </Rating>
          </Comment>
          <Heading>DODAJ KOMENTARZ</Heading>
        </Article>
        <ScrollY>
          <Arrow d="M7 3L13 11H1z" />
          <TrackY><Thumb $vertical /></TrackY>
          <Arrow d="M1 3h12L7 11z" />
        </ScrollY>
        <ScrollX>
          <Arrow d="M11 1v12L3 7z" />
          <TrackX><Thumb /></TrackX>
          <Arrow d="M3 1v12l8-6z" />
        </ScrollX>
      </Viewport>

      <Taskbar>
        <Weather aria-label="Weather"><Temperature>25°</Temperature></Weather>
        <Apps>
          {apps.map((a) => {
            const Cell = a.current ? CurrentApp : AppButton;
            return (
              <Cell key={a.name} aria-label={a.name} $tile={a.tile} $mark={a.mark} $wide={a.current}>
                {a.icon}
                {a.badge && <Badge>{a.badge}</Badge>}
              </Cell>
            );
          })}
        </Apps>
        <Tray>
          <TrayButton $w={36} aria-label="Hidden icons"><Line size={18} box={18} sw={2}><path d="M2 13l7-8 7 8" /></Line></TrayButton>
          <TrayButton $w={60} aria-label="OneDrive"><CloudIcon /></TrayButton>
          <TrayButton $w={36} aria-label="Wi-Fi"><Line sw={1.8}><path d="M1 9.500c6-6.500 16-6.500 22 0M4.500 13.500c4-4.500 11-4.500 15 0M8 17c2.500-2.500 5.500-2.500 8 0" /><circle cx="12" cy="20" r="1.500" fill="currentColor" /></Line></TrayButton>
          <TrayButton $w={36} aria-label="Volume"><Line><path d="M1 9h4l5-5v16l-5-5H1zM13 8.500c2 2 2 5 0 7M16 6c3.500 3.500 3.500 8.500 0 12" /><path d="M19 3.500c5 5 5 12 0 17" opacity=".3" /></Line></TrayButton>
          <TrayButton $w={36} aria-label="Battery"><Line sw={1.8}><path d="M9 7h9.500A2.500 2.500 0 0 1 21 9.500v8a2.500 2.500 0 0 1-2.500 2.500h-14A2.500 2.500 0 0 1 2 17.500V14" /><rect x="6" y="10" width="12" height="7" fill="currentColor" /><path d="M23 12v3" /><path d="M6 0L1 7h3l-1 5 5-7H5z" fill="currentColor" strokeWidth="1" /></Line></TrayButton>
          <Clock>15:09<br />20.09.2023</Clock>
          <TrayButton $w={28} aria-label="Notifications"><BellIcon /></TrayButton>
        </Tray>
      </Taskbar>
    </Screen>
  );
}
